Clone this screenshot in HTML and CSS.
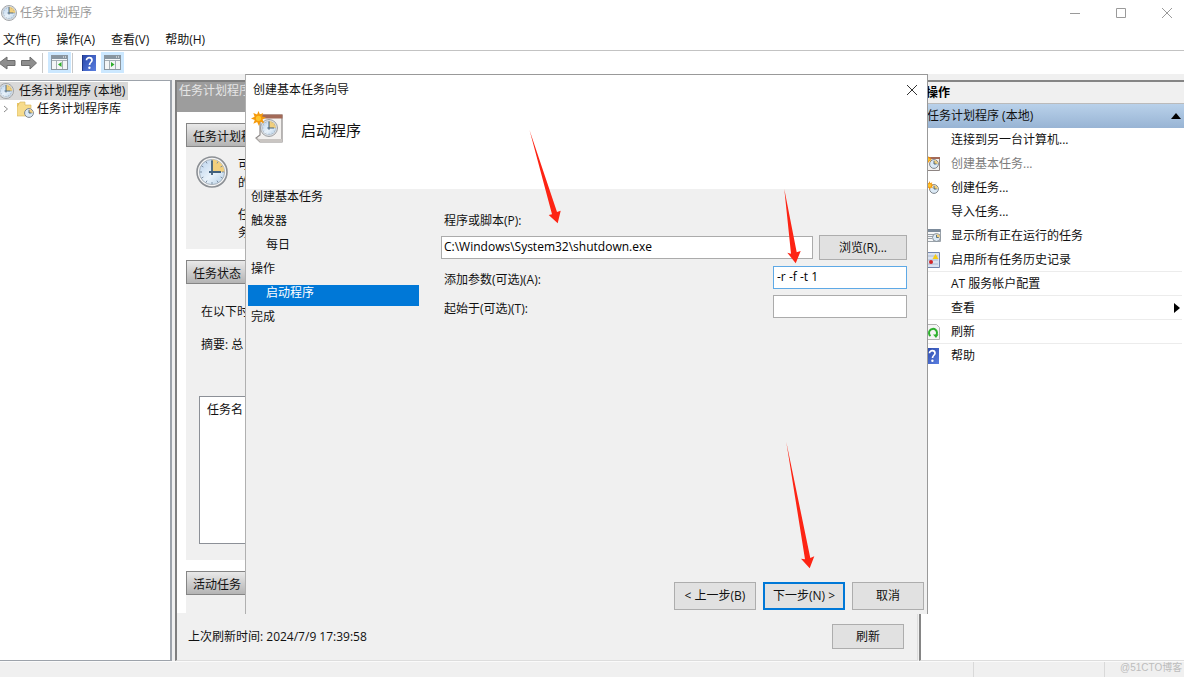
FILE: index.html
```html
<!DOCTYPE html>
<html lang="zh-CN">
<head>
<meta charset="utf-8">
<title>任务计划程序</title>
<link rel="stylesheet" href="styles.css">
</head>
<body>
<svg class="defs" width="0" height="0" aria-hidden="true">
  <defs>
    <linearGradient id="face" x1="0" y1="0" x2="1" y2="1">
      <stop offset="0" stop-color="#b9d2ec"/><stop offset=".55" stop-color="#e9f2fa"/><stop offset="1" stop-color="#b4cfe6"/>
    </linearGradient>
    <linearGradient id="help" x1="0" y1="0" x2="1" y2="1">
      <stop offset="0" stop-color="#2846a8"/><stop offset="1" stop-color="#5b7fe0"/>
    </linearGradient>
    <symbol id="clock" viewBox="0 0 32 32">
      <circle cx="16" cy="16" r="15" fill="#f4f4f4" stroke="#8b8f94" stroke-width="1.6"/>
      <circle cx="16" cy="16" r="12.6" fill="url(#face)" stroke="#a9b3bd"/>
      <path d="M16 16V3.6A12.4 12.4 0 0 1 28.4 16Z" fill="#f2cf7c"/>
      <path d="M16 4v2M16 26v2M4 16h2M26 16h2M10 5.6l1 1.8M5.6 10l1.8 1M5.6 22l1.8-1M10 26.4l1-1.8M22 26.4l-1-1.8M26.4 22l-1.8-1M22 5.6l-1 1.8M26.4 10l-1.8 1" stroke="#7d8fa3" fill="none"/>
      <path d="M16 4.500V19M13 16h12" stroke="#41607c" stroke-width="1.8" fill="none"/>
    </symbol>
    <symbol id="miniclock" viewBox="0 0 12 12">
      <circle cx="6" cy="6" r="5.300" fill="#dbe9f5" stroke="#7f868d" stroke-width="1.200"/>
      <path d="M6 6V1.500A4.500 4.500 0 0 1 10.500 6Z" fill="#f2cf7c"/>
      <path d="M6 2.500V6h3" stroke="#34536f" fill="none"/>
    </symbol>
    <symbol id="spark" viewBox="0 0 16 16">
      <path d="M8 0l1.500 3.800L13 2l-1.200 3.900L16 7l-3.700 2L14 13l-4-1.500L8.500 16 6.500 11.800 2.500 13.500 4 9.500 0 8l3.800-2L2.500 2 6.500 3.800Z" fill="#f59a0c"/>
      <circle cx="8" cy="7.800" r="2.800" fill="#ffc52e"/>
    </symbol>
    <symbol id="newtask" viewBox="0 0 32 32">
      <path d="M9 4h22v27H9l-4-4 4-3Z" fill="#f3f1ef" stroke="#8d8988" stroke-width="1.200"/>
      <path d="M9 3.500h22.500v4H9Z" fill="#a36a58"/>
      <path d="M5 27l4 4h22v-3H9Z" fill="#c9c5c2"/>
      <svg x="9" y="8" width="18" height="18"><use href="#clock"/></svg>
      <svg x="0" y="0" width="15" height="15"><use href="#spark"/></svg>
    </symbol>
    <symbol id="helpbook" viewBox="0 0 14 16">
      <rect width="14" height="16" fill="url(#help)"/><path d="M.5 0v16" stroke="#1f3788"/>
      <path d="M4.500 5.200C4.500 1.800 10 1.900 10 5.200c0 2-2.500 2.200-2.500 4.800" fill="none" stroke="#fff" stroke-width="1.700"/>
      <circle cx="7.400" cy="12.700" r="1.200" fill="#fff"/>
    </symbol>
    <symbol id="pane" viewBox="0 0 17 15">
      <rect x=".5" y=".5" width="16" height="14" fill="#f3f5f6" stroke="#8b969f"/>
      <path d="M1 1h15v3H1Z" fill="#8795a0"/><path d="M12 2h1M14 2h1" stroke="#fff"/>
      <path d="M1 5.500h15M5.500 6v8M11.500 6v8" stroke="#a5afb6"/>
    </symbol>
  </defs>
</svg>

<div class="app">
  <header class="titlebar">
    <svg class="i16"><use href="#clock"/></svg>
    <h1>任务计划程序</h1>
    <div class="winbtns">
      <button type="button" aria-label="最小化"><svg class="i12" viewBox="0 0 12 12"><path d="M1 6.500h10"/></svg></button>
      <button type="button" aria-label="最大化"><svg class="i12" viewBox="0 0 12 12"><path d="M1.500 1.500h9v9h-9Z"/></svg></button>
      <button type="button" aria-label="关闭"><svg class="i12" viewBox="0 0 12 12"><path d="M1 1l10 10M11 1L1 11"/></svg></button>
    </div>
  </header>
  <nav class="menubar">
    <button type="button">文件(F)</button><button type="button">操作(A)</button><button type="button">查看(V)</button><button type="button">帮助(H)</button>
  </nav>
  <div class="toolbar">
    <button type="button" aria-label="后退"><svg width="16" height="14" viewBox="0 0 16 14"><path d="M-1 7l8-6v3.500h8v5H7V13Z" fill="#8e8e8e" stroke="#6d6d6d"/></svg></button>
    <button type="button" aria-label="前进"><svg width="16" height="14" viewBox="0 0 16 14"><path d="M15.500 7L9 1v3.500H.500v5H9V13Z" fill="#8e8e8e" stroke="#6d6d6d"/></svg></button>
    <i class="sep"></i>
    <button type="button" class="on" aria-label="显示控制台树"><svg width="17" height="15" viewBox="0 0 17 15"><use href="#pane"/><path d="M10.500 7v5L7 9.500Z" fill="#2fae2b"/></svg></button>
    <i class="sep"></i>
    <button type="button" class="mid" aria-label="帮助"><svg width="14" height="16"><use href="#helpbook"/></svg></button>
    <button type="button" class="on" aria-label="显示操作窗格"><svg width="17" height="15" viewBox="0 0 17 15"><use href="#pane"/><path d="M7 7v5l3.500-2.500Z" fill="#2fae2b"/></svg></button>
  </div>

  <div class="panes">
    <aside class="tree">
      <div class="node root"><svg class="i16"><use href="#clock"/></svg><span>任务计划程序 (本地)</span></div>
      <div class="node child">
        <svg class="chev" viewBox="0 0 6 8"><path d="M1 1l3.500 3L1 7"/></svg>
        <svg class="i17" viewBox="0 0 17 17"><path d="M0 2h6l1.500 2H13v11H0Z" fill="#e9c766"/><path d="M3 1h5v3h6v3L11 15H0V6Z" fill="#f7dc8c" stroke="#d5b257" stroke-width=".6"/><svg x="7" y="7" width="10" height="10"><use href="#miniclock"/></svg></svg>
        <span>任务计划程序库</span>
      </div>
    </aside>

    <main class="center">
      <div class="center-head">任务计划程序</div>
      <div class="content">
        <section>
          <h2>任务计划程</h2>
          <div class="panel overview">
            <svg class="i32"><use href="#clock"/></svg>
            <div><p>可<br>的</p><p>任<br>务</p></div>
          </div>
        </section>
        <section>
          <h2>任务状态</h2>
          <div class="panel status">
            <p>在以下时</p><p>摘要: 总</p>
            <div class="tasklist">任务名</div>
          </div>
        </section>
        <section>
          <h2>活动任务</h2>
          <div class="panel stub"></div>
        </section>
      </div>
      <footer class="center-foot">
        <span>上次刷新时间: 2024/7/9 17:39:58</span>
        <button type="button" class="btn refresh">刷新</button>
      </footer>
    </main>

    <aside class="actions">
      <h2>操作</h2>
      <button type="button" class="group"><span>任务计划程序 (本地)</span><svg width="10" height="6" viewBox="0 0 10 6"><path d="M0 6l5-6 5 6Z"/></svg></button>
      <ul>
        <li><button type="button"><span class="ico"></span>连接到另一台计算机...</button></li>
        <li><button type="button" disabled><span class="ico"><svg class="i16" viewBox="0 0 16 16"><path d="M1.500 1.500h13v13h-13Z" fill="#f3f1ef" stroke="#8d8482"/><path d="M2 1h13v2H2Z" fill="#a36a58"/><svg x="4" y="3" width="10" height="10"><use href="#miniclock"/></svg><svg x="0" y="0" width="7" height="7"><use href="#spark"/></svg></svg></span>创建基本任务...</button></li>
        <li><button type="button"><span class="ico"><svg class="i16" viewBox="0 0 16 16"><svg x="4" y="4" width="10" height="10"><use href="#miniclock"/></svg><svg x="0" y="1" width="9" height="9"><use href="#spark"/></svg></svg></span>创建任务...</button></li>
        <li><button type="button"><span class="ico"></span>导入任务...</button></li>
        <li><button type="button"><span class="ico"><svg class="i16" viewBox="0 0 16 16"><path d="M.5 1.500h15v12H.5Z" fill="#f6f7f8" stroke="#9aa2aa"/><path d="M1 1h14.500v3H1Z" fill="#7c8b9b"/><path d="M3 6.500h6M3 8.500h5M3 10.500h4" stroke="#9aa2aa"/><svg x="7" y="5" width="9" height="9"><use href="#miniclock"/></svg></svg></span>显示所有正在运行的任务</button></li>
        <li class="line"><button type="button"><span class="ico"><svg class="i16" viewBox="0 0 16 16"><path d="M1.500.5h13v15h-13Z" fill="#dbe3f1" stroke="#7285ad"/><path d="M3 4h10M3 8h10M3 12h10" stroke="#a9b8d4"/><path d="M10.500 2l3 5h-6Z" fill="#f6cb13"/><circle cx="6" cy="10" r="2" fill="#d32528"/></svg></span>启用所有任务历史记录</button></li>
        <li class="line"><button type="button"><span class="ico"></span>AT 服务帐户配置</button></li>
        <li class="line"><button type="button"><span class="ico"></span>查看<svg class="more" width="6" height="10" viewBox="0 0 6 10"><path d="M0 0l6 5-6 5Z"/></svg></button></li>
        <li class="line"><button type="button"><span class="ico"><svg class="i16" viewBox="0 0 16 16"><path d="M1.500.5h10l3 3v12h-13Z" fill="#f5f5f5" stroke="#b3b3b3"/><path d="M5.500 12A4 4 0 1 1 11 11.500" fill="none" stroke="#2eb02e" stroke-width="2"/><path d="M8 10.500h5.500L11 14Z" fill="#2eb02e"/></svg></span>刷新</button></li>
        <li><button type="button"><span class="ico"><svg width="14" height="16"><use href="#helpbook"/></svg></span>帮助</button></li>
      </ul>
    </aside>
  </div>

  <footer class="statusbar"><span></span><span></span><span>@51CTO博客</span></footer>

  <form class="dialog" role="dialog" aria-labelledby="dlg-title">
    <header class="dlg-head">
      <div class="dlg-title"><span id="dlg-title">创建基本任务向导</span>
        <button type="button" aria-label="关闭"><svg class="i12" viewBox="0 0 12 12"><path d="M1 1l10 10M11 1L1 11"/></svg></button></div>
      <div class="dlg-hero"><svg class="i32"><use href="#newtask"/></svg><h2>启动程序</h2></div>
    </header>
    <div class="dlg-body">
      <ol class="steps">
        <li>创建基本任务</li><li>触发器</li><li class="sub">每日</li><li>操作</li><li class="sub current" aria-current="step">启动程序</li><li>完成</li>
      </ol>
      <div class="fields">
        <label for="program">程序或脚本(P):</label>
        <div class="row browse"><input id="program" type="text" value="C:\Windows\System32\shutdown.exe"><button type="button" class="btn">浏览(R)...</button></div>
        <div class="row"><label for="args">添加参数(可选)(A):</label><input id="args" class="short focus" type="text" value="-r -f -t 1"></div>
        <div class="row"><label for="startin">起始于(可选)(T):</label><input id="startin" class="short" type="text"></div>
      </div>
    </div>
    <footer class="dlg-foot">
      <button type="button" class="btn back">&lt; 上一步(B)</button>
      <button type="button" class="btn next">下一步(N) &gt;</button>
      <button type="button" class="btn cancel">取消</button>
    </footer>
  </form>

  <svg class="arrows" width="1184" height="677" viewBox="0 0 1184 677" aria-hidden="true">
    <path d="M529.500 130L557 212l3.700-1.300L557.700 223.300 548.700 215l3.300-.8Z"/>
    <path d="M784.300 189L796.700 252.300l4-1.300L795.700 263.300 787.300 252.700l3.700 1Z"/>
    <path d="M786.300 442L810.300 558l4-1.700L809.700 568.300 801 558.700l4 .6Z"/>
  </svg>
</div>
</body>
</html>
```
FILE: styles.css
```css
* { box-sizing: border-box; }
body { margin: 0; background: #fff; color: #111; font: 12px/16px "Open Sans", "Noto Sans CJK SC", sans-serif; }
h1, h2, p, ul, ol { margin: 0; padding: 0; font-size: 12px; font-weight: 400; }
ul, ol { list-style: none; }
button, input { font: inherit; color: inherit; margin: 0; }
button { padding: 0; border: 0; background: none; }
svg { display: block; flex: none; }
.defs { position: absolute; }
.i12 { width: 12px; height: 12px; fill: none; stroke: currentColor; }
.i16 { width: 16px; height: 16px; }
.i17 { width: 17px; height: 17px; }
.i32 { width: 32px; height: 32px; }

.app { position: relative; display: flex; flex-direction: column; min-height: 100vh; overflow: hidden; }
.titlebar { display: flex; align-items: center; gap: 3px; height: 26px; padding: 0 11px 0 1px; color: #9a9a9a; }
.winbtns { display: flex; gap: 34px; margin-left: auto; }
.menubar { display: flex; gap: 16px; height: 25px; padding: 3px 3px 0; border-bottom: 1px solid #c3c3c3; }
.toolbar { display: flex; align-items: center; height: 23px; gap: 5px; }
.toolbar button { display: flex; align-items: center; justify-content: center; }
.toolbar .on { width: 23px; height: 21px; background: #cce8ff; }
.toolbar .sep { width: 1px; height: 20px; background: #c8c8c8; }
.toolbar .sep + .on { margin-right: -4px; }
.toolbar .mid { margin-left: 4px; }

.panes { display: flex; flex: 1; padding-top: 6px; background: #f0f0f0; }
.tree { width: 172px; background: #fff; border: solid #9da3ab; border-width: 1px 2px 1px 0; }
.node { display: flex; align-items: center; height: 18px; }
.root { width: 128px; gap: 5px; background: #d9d9d9; margin-top: 1px; padding-left: 0; }
.root .i16 { margin-left: -2px; }
.child { padding-left: 3px; }
.chev { width: 6px; height: 8px; fill: none; stroke: #8a8a8a; margin-right: 8px; }
.child .i17 { margin-right: 3px; }

.center { display: flex; flex-direction: column; flex: 1; margin-left: 3px; border: solid #7f7f7f; border-width: 2px 0 0 2px; border-bottom: 1px solid #ddd; }
.center-head { height: 30px; padding: 1px 2px; background: #9d9d9d; color: #e6e6e6; }
.content { display: flex; flex-direction: column; gap: 11px; padding: 11px 9px 0; background: #fff; }
.content h2 { height: 24px; padding: 4px 6px 0; border: 1px solid #858585; background: linear-gradient(#e9e9e9, #b4b4b4); line-height: 18px; }
.panel { background: #f0f0f0; }
.overview { display: flex; gap: 10px; height: 102px; padding: 9px 10px; }
.overview div { display: flex; flex-direction: column; gap: 14px; }
.overview p { line-height: 18px; }
.status { display: flex; flex-direction: column; gap: 17px; height: 276px; padding: 20px 12px 16px 15px; }
.tasklist { flex: 1; margin: 26px 0 0 -2px; padding: 5px 7px; border: 1px solid #8c9097; background: #fff; }
.stub { height: 18px; }
.center-foot { display: flex; align-items: center; justify-content: space-between; flex: 1; padding: 0 13px 0 11px; border-right: 1px solid #ddd; }

.actions { width: 265px; margin-left: 1px; background: #fff; border: solid #858585; border-width: 2px 0 0 2px; border-bottom: 1px solid #ddd; }
.actions h2 { height: 22px; padding: 3px 5px; background: #f0f0f0; border-bottom: 1px solid #bbb; font-weight: 700; color: #000; }
.group { display: flex; align-items: center; justify-content: space-between; width: 100%; height: 24px; padding: 0 3px 0 6px; background: linear-gradient(#b9d1ea, #98b4d4); }
.actions li { height: 24px; margin-right: 2px; }
.actions li.line { border-bottom: 1px solid #ececec; }
.actions li button { display: flex; align-items: center; width: 100%; height: 100%; padding-left: 4px; }
.actions button:disabled { color: #7c7c7c; }
.ico { width: 26px; }
.more { margin: 0 2px 0 auto; }
.statusbar { display: flex; justify-content: flex-end; height: 16px; background: #f0f0f0; border-top: 1px solid #fafafa; color: #bdbdbd; font: 10px/12px "Liberation Sans", "Noto Sans CJK SC", sans-serif; }
.statusbar span { width: 131px; border-left: 1px solid #d9d9d9; }
.statusbar span:last-child { width: 80px; padding-left: 15px; white-space: nowrap; }
.statusbar span:first-child { border: 0; }

.btn { border: 1px solid #adadad; background: #e1e1e1; text-align: center; white-space: nowrap; }
.refresh { width: 72px; height: 25px; }

.dialog { position: absolute; top: 74px; left: 245px; right: 256px; display: flex; flex-direction: column; min-height: 540px; background: #f0f0f0; border: 1px solid #999; border-bottom: 0; border-left-color: #b0b0b0; }
.dlg-head { height: 114px; background: #fff; }
.dlg-title { display: flex; justify-content: space-between; align-items: center; height: 29px; padding: 0 9px 0 7px; }
.dlg-title .i12 { stroke: #333; }
.dlg-hero { display: flex; align-items: center; gap: 18px; padding: 7px 5px; }
.dlg-hero h2 { font-size: 15px; line-height: 20px; padding-top: 6px; }
.dlg-body { display: flex; flex: 1; gap: 22px; }
.steps { display: flex; flex-direction: column; gap: 3px; width: 173px; padding-left: 2px; }
.steps li { height: 21px; padding-left: 3px; }
.steps .sub { padding-left: 18px; }
.steps .current { background: #0078d7; color: #fff; }
.fields { flex: 1; padding: 24px 20px 0 0; }
.fields label { padding-left: 3px; }
.fields > label { display: block; }
.fields input { height: 23px; min-width: 0; padding: 0 2px 2px; border: 1px solid #ababab; background: #fff; outline: 0; color: #000; }
.row { display: flex; align-items: center; justify-content: space-between; margin-top: 6px; }
.row label { padding-top: 4px; }
.browse { gap: 6px; margin: 6px 0; }
.browse input { flex: 1; }
.browse .btn { width: 88px; height: 25px; }
.fields .short { width: 134px; padding-left: 3px; }
.fields .focus { border-color: #5ea9e6; }
.dlg-foot { display: flex; justify-content: flex-end; gap: 7px; padding: 0 3px 4px; }
.dlg-foot .btn { height: 28px; width: 82px; }
.dlg-foot .next { border: 2px solid #0078d7; }
.dlg-foot .cancel { width: 72px; }
.arrows { position: absolute; top: 0; left: 0; fill: #fd2414; pointer-events: none; }
```
